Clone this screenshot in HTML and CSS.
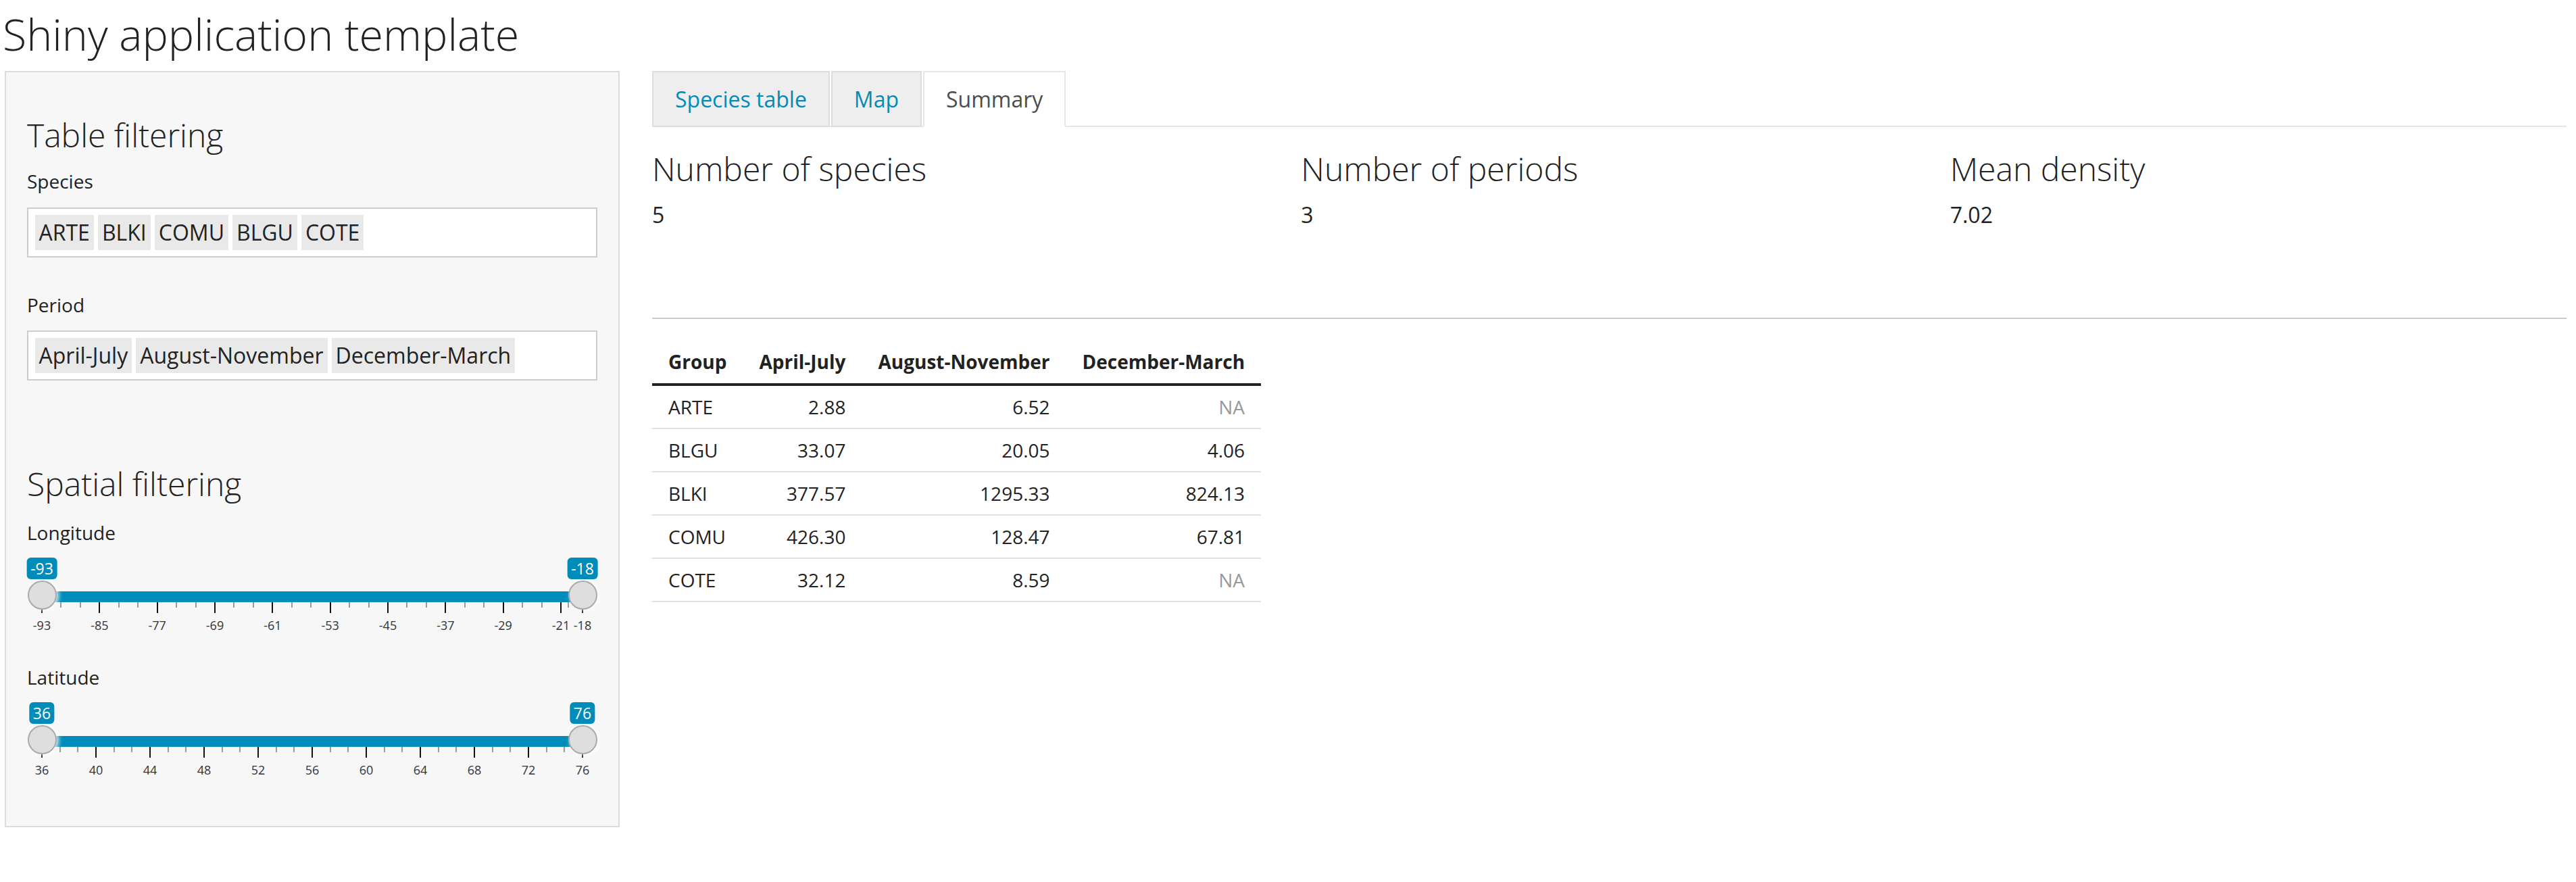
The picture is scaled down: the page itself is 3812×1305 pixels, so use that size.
FILE: index.html
```html
<!DOCTYPE html>
<html lang="en">
<head>
<meta charset="utf-8">
<title>Shiny application template</title>
<link rel="stylesheet" href="styles.css">
</head>
<body>
<div class="page">
  <h2 class="app-title">Shiny application template</h2>
  <div class="layout">
    <aside class="well">
      <h3 class="section-title">Table filtering</h3>
      <label class="field-label label-species">Species</label>
      <div class="tag-input">
        <span class="chip">ARTE</span><span class="chip">BLKI</span><span class="chip">COMU</span><span class="chip">BLGU</span><span class="chip">COTE</span>
      </div>
      <label class="field-label label-period">Period</label>
      <div class="tag-input tag-input-period">
        <span class="chip">April-July</span><span class="chip">August-November</span><span class="chip">December-March</span>
      </div>

      <h3 class="section-title spatial">Spatial filtering</h3>
      <label class="field-label label-lon">Longitude</label>
      <div class="slider">
        <div class="slider-inner">
          <div class="track"></div>
          <div class="grid">
            <span class="tick major" style="left:0%"></span>
            <span class="tick" style="left:3.5556%"></span>
            <span class="tick" style="left:7.1111%"></span>
            <span class="tick major" style="left:10.6667%"></span>
            <span class="tick" style="left:14.2222%"></span>
            <span class="tick" style="left:17.7778%"></span>
            <span class="tick major" style="left:21.3333%"></span>
            <span class="tick" style="left:24.8889%"></span>
            <span class="tick" style="left:28.4444%"></span>
            <span class="tick major" style="left:32%"></span>
            <span class="tick" style="left:35.5556%"></span>
            <span class="tick" style="left:39.1111%"></span>
            <span class="tick major" style="left:42.6667%"></span>
            <span class="tick" style="left:46.2222%"></span>
            <span class="tick" style="left:49.7778%"></span>
            <span class="tick major" style="left:53.3333%"></span>
            <span class="tick" style="left:56.8889%"></span>
            <span class="tick" style="left:60.4444%"></span>
            <span class="tick major" style="left:64%"></span>
            <span class="tick" style="left:67.5556%"></span>
            <span class="tick" style="left:71.1111%"></span>
            <span class="tick major" style="left:74.6667%"></span>
            <span class="tick" style="left:78.2222%"></span>
            <span class="tick" style="left:81.7778%"></span>
            <span class="tick major" style="left:85.3333%"></span>
            <span class="tick" style="left:88.8889%"></span>
            <span class="tick" style="left:92.4444%"></span>
            <span class="tick major" style="left:96%"></span>
            <span class="tick" style="left:97.3333%"></span>
            <span class="tick" style="left:98.6667%"></span>
            <span class="tick major" style="left:100%"></span>
            <span class="tick-label" style="left:0%">-93</span>
            <span class="tick-label" style="left:10.6667%">-85</span>
            <span class="tick-label" style="left:21.3333%">-77</span>
            <span class="tick-label" style="left:32%">-69</span>
            <span class="tick-label" style="left:42.6667%">-61</span>
            <span class="tick-label" style="left:53.3333%">-53</span>
            <span class="tick-label" style="left:64%">-45</span>
            <span class="tick-label" style="left:74.6667%">-37</span>
            <span class="tick-label" style="left:85.3333%">-29</span>
            <span class="tick-label" style="left:96%">-21</span>
            <span class="tick-label" style="left:100%">-18</span>
          </div>
          <span class="handle" style="left:0%"></span>
          <span class="handle" style="left:100%"></span>
          <span class="badge" style="left:0%">-93</span>
          <span class="badge" style="left:100%">-18</span>
        </div>
      </div>

      <label class="field-label label-lat">Latitude</label>
      <div class="slider">
        <div class="slider-inner">
          <div class="track"></div>
          <div class="grid">
            <span class="tick major" style="left:0%"></span>
            <span class="tick" style="left:3.3333%"></span>
            <span class="tick" style="left:6.6667%"></span>
            <span class="tick major" style="left:10%"></span>
            <span class="tick" style="left:13.3333%"></span>
            <span class="tick" style="left:16.6667%"></span>
            <span class="tick major" style="left:20%"></span>
            <span class="tick" style="left:23.3333%"></span>
            <span class="tick" style="left:26.6667%"></span>
            <span class="tick major" style="left:30%"></span>
            <span class="tick" style="left:33.3333%"></span>
            <span class="tick" style="left:36.6667%"></span>
            <span class="tick major" style="left:40%"></span>
            <span class="tick" style="left:43.3333%"></span>
            <span class="tick" style="left:46.6667%"></span>
            <span class="tick major" style="left:50%"></span>
            <span class="tick" style="left:53.3333%"></span>
            <span class="tick" style="left:56.6667%"></span>
            <span class="tick major" style="left:60%"></span>
            <span class="tick" style="left:63.3333%"></span>
            <span class="tick" style="left:66.6667%"></span>
            <span class="tick major" style="left:70%"></span>
            <span class="tick" style="left:73.3333%"></span>
            <span class="tick" style="left:76.6667%"></span>
            <span class="tick major" style="left:80%"></span>
            <span class="tick" style="left:83.3333%"></span>
            <span class="tick" style="left:86.6667%"></span>
            <span class="tick major" style="left:90%"></span>
            <span class="tick" style="left:93.3333%"></span>
            <span class="tick" style="left:96.6667%"></span>
            <span class="tick major" style="left:100%"></span>
            <span class="tick-label" style="left:0%">36</span>
            <span class="tick-label" style="left:10%">40</span>
            <span class="tick-label" style="left:20%">44</span>
            <span class="tick-label" style="left:30%">48</span>
            <span class="tick-label" style="left:40%">52</span>
            <span class="tick-label" style="left:50%">56</span>
            <span class="tick-label" style="left:60%">60</span>
            <span class="tick-label" style="left:70%">64</span>
            <span class="tick-label" style="left:80%">68</span>
            <span class="tick-label" style="left:90%">72</span>
            <span class="tick-label" style="left:100%">76</span>
          </div>
          <span class="handle" style="left:0%"></span>
          <span class="handle" style="left:100%"></span>
          <span class="badge" style="left:0%">36</span>
          <span class="badge" style="left:100%">76</span>
        </div>
      </div>
    </aside>

    <main class="main">
      <ul class="tabs">
        <li class="tab"><a href="#">Species table</a></li>
        <li class="tab"><a href="#">Map</a></li>
        <li class="tab active"><a href="#">Summary</a></li>
      </ul>

      <div class="stats">
        <div class="stat">
          <h3 class="stat-title">Number of species</h3>
          <div class="stat-value">5</div>
        </div>
        <div class="stat">
          <h3 class="stat-title">Number of periods</h3>
          <div class="stat-value">3</div>
        </div>
        <div class="stat">
          <h3 class="stat-title">Mean density</h3>
          <div class="stat-value">7.02</div>
        </div>
      </div>

      <hr class="divider">

      <table class="summary-table">
        <thead>
          <tr><th class="left">Group</th><th>April-July</th><th>August-November</th><th>December-March</th></tr>
        </thead>
        <tbody>
          <tr><td class="left">ARTE</td><td>2.88</td><td>6.52</td><td class="na">NA</td></tr>
          <tr><td class="left">BLGU</td><td>33.07</td><td>20.05</td><td>4.06</td></tr>
          <tr><td class="left">BLKI</td><td>377.57</td><td>1295.33</td><td>824.13</td></tr>
          <tr><td class="left">COMU</td><td>426.30</td><td>128.47</td><td>67.81</td></tr>
          <tr><td class="left">COTE</td><td>32.12</td><td>8.59</td><td class="na">NA</td></tr>
        </tbody>
      </table>
    </main>
  </div>
</div>
</body>
</html>
```

FILE: styles.css
```css
* { box-sizing: border-box; }

html, body {
  margin: 0;
  padding: 0;
  background: #ffffff;
}

body {
  font-family: "Open Sans", "Noto Sans", "DejaVu Sans", sans-serif;
  color: #222222;
  font-size: 28px;
  line-height: 40px;
}

.page {
  padding: 0 14px 0 7px;
}

.app-title {
  margin: 0 0 5px -3px;
  font-size: 64.5px;
  font-weight: 300;
  line-height: 100px;
  color: #222222;
}

.layout {
  display: flex;
  align-items: flex-start;
  gap: 48px;
}

/* ---------- sidebar ---------- */
.well {
  flex: 0 0 910px;
  background: #f7f7f7;
  border: 2px solid #dcdcdc;
  padding: 66px 31px 69px;
}

.section-title {
  margin: 0;
  font-size: 48px;
  font-weight: 300;
  line-height: 53px;
}

.section-title.spatial { margin-top: 126px; }

.field-label {
  display: block;
  font-size: 28px;
  line-height: 40px;
}

.label-species { margin-top: 22px; }
.label-period { margin-top: 50px; }
.label-lon { margin-top: 26px; }
.label-lat { margin-top: 43px; }

.tag-input {
  margin-top: 19px;
  display: flex;
  gap: 6px;
  background: #ffffff;
  border: 2px solid #cccccc;
  padding: 9px 9.5px;
}

.tag-input-period { margin-top: 17.5px; }

.chip {
  background: #e9e9e9;
  color: #222222;
  font-size: 32px;
  line-height: 40px;
  padding: 6px;
}

/* ---------- range slider ---------- */
.slider {
  margin-top: 17px;
  height: 114px;
  padding: 0 22px;
}

.slider-inner {
  position: relative;
  height: 100%;
}

.track {
  position: absolute;
  left: 0;
  right: 0;
  top: 50px;
  height: 16px;
  background: #008cba;
}

.grid {
  position: absolute;
  left: 0;
  right: 0;
  top: 0;
  bottom: 0;
}

.tick {
  position: absolute;
  top: 66px;
  width: 2px;
  height: 8px;
  margin-left: -1px;
  background: #9a9a9a;
}

.tick.major {
  height: 16px;
  background: #111111;
}

.tick-label {
  position: absolute;
  top: 88px;
  font-size: 18px;
  line-height: 24px;
  color: #333333;
  white-space: nowrap;
  transform: translateX(-50%);
}

.handle {
  position: absolute;
  top: 34px;
  width: 43px;
  height: 43px;
  margin-left: -21.5px;
  border-radius: 50%;
  background: #dedede;
  border: 2px solid #ababab;
  box-shadow: 3px 1px 6px rgba(255, 255, 255, 0.85);
}

.badge {
  position: absolute;
  top: 0;
  height: 32px;
  padding: 0 5.5px;
  font-size: 23px;
  line-height: 32px;
  color: #ffffff;
  background: #008cba;
  border-radius: 6px;
  white-space: nowrap;
  transform: translateX(-50%);
}

/* ---------- main panel ---------- */
.main {
  flex: 1 1 auto;
  min-width: 0;
}

.tabs {
  list-style: none;
  margin: 0;
  padding: 0;
  display: flex;
  border-bottom: 2px solid #e6e6e6;
}

.tab {
  margin: 0 2px -2px 0;
}

.tab a {
  display: block;
  padding: 17.5px 32px;
  font-size: 32px;
  line-height: 44px;
  color: #008cba;
  text-decoration: none;
  background: #eeeeee;
  border: 2px solid #dddddd;
}

.tab.active a {
  color: #4d4d4d;
  background: #ffffff;
  border-color: #e6e6e6;
  border-bottom-color: #ffffff;
}

.stats {
  display: grid;
  grid-template-columns: repeat(3, 1fr);
  column-gap: 48px;
  margin-top: 35px;
}

.stat-title {
  margin: 0;
  font-size: 48px;
  font-weight: 300;
  line-height: 53px;
}

.stat-value {
  margin-top: 20px;
  font-size: 32px;
  line-height: 43px;
}

.divider {
  margin: 131px 0 0;
  height: 0;
  border: 0;
  border-top: 2px solid #cccccc;
}

.summary-table {
  margin-top: 31px;
  border-collapse: collapse;
  font-size: 28px;
  line-height: 40px;
}

.summary-table th {
  padding: 12px 24px;
  font-weight: 700;
  text-align: right;
  border-bottom: 4px solid #222222;
}

.summary-table td {
  padding: 11px 24px;
  text-align: right;
  border-bottom: 2px solid #dee2e6;
}

.summary-table .left { text-align: left; }

.summary-table .na { color: #999999; }
```
